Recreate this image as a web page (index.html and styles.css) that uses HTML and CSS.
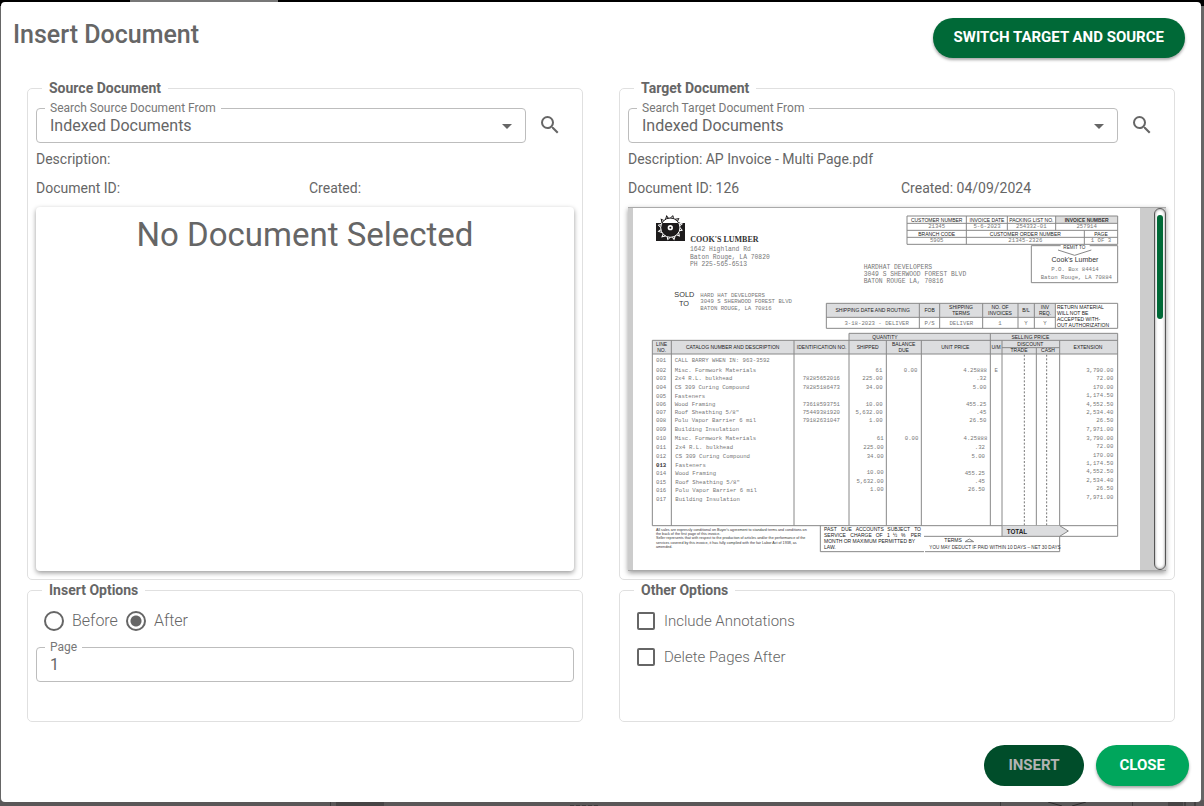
FILE: index.html
```html
<!DOCTYPE html>
<html lang="en">
<head>
<meta charset="utf-8">
<meta name="viewport" content="width=device-width, initial-scale=1">
<title>Insert Document</title>
<link rel="stylesheet" href="styles.css">
</head>
<body class="backdrop">
<div class="backdrop-tab"></div>
<svg class="backdrop-foot" width="1204" height="4" viewBox="0 0 1204 4" aria-hidden="true">
  <path d="M330.500 0V4M1000.500 0V4M1132.500 0V4" stroke="#3e3c3d"/>
  <path d="M336 0h48v4h-48zM1168 0h15v4h-15z" fill="#474445"/>
  <path d="M1048 0l14 4M1086 0l-14 4M1185 0v4M1195 0v4" stroke="#2e2c2d" fill="none"/>
  <path d="M570 3.500h28" stroke="#3e3c3d" stroke-dasharray="4 2"/>
</svg>
<main class="dialog" role="dialog" aria-labelledby="dialog-title">
  <header class="dialog-header">
    <h1 class="dialog-title" id="dialog-title">Insert Document</h1>
    <button class="btn btn-primary" type="button">SWITCH TARGET AND SOURCE</button>
  </header>

  <form class="columns">
    <fieldset class="group">
      <legend class="group-title">Source Document</legend>
      <div class="search-row">
        <div class="field">
          <label class="field-label" for="source-from">Search Source Document From</label>
          <select class="field-control" id="source-from"><option>Indexed Documents</option></select>
          <svg class="field-arrow" width="24" height="24" viewBox="0 0 24 24" aria-hidden="true"><path d="M7 10l5 5 5-5z"/></svg>
        </div>
        <button class="icon-btn" type="button" aria-label="Search source document">
          <svg width="24" height="24" viewBox="0 0 24 24" aria-hidden="true"><path d="M15.500 14h-.79l-.28-.27A6.471 6.471 0 0 0 16 9.500 6.500 6.500 0 1 0 9.500 16c1.610 0 3.090-.59 4.230-1.570l.27.28v.79l5 4.990L20.490 19l-4.990-5zm-6 0C7.010 14 5 11.990 5 9.500S7.010 5 9.500 5 14 7.010 14 9.500 11.990 14 9.500 14z"/></svg>
        </button>
      </div>
      <div class="info">
        <span class="info-wide">Description:</span>
        <span>Document ID:</span>
        <span>Created:</span>
      </div>
      <div class="preview preview-empty">No Document Selected</div>
    </fieldset>

    <fieldset class="group">
      <legend class="group-title">Target Document</legend>
      <div class="search-row">
        <div class="field">
          <label class="field-label" for="target-from">Search Target Document From</label>
          <select class="field-control" id="target-from"><option>Indexed Documents</option></select>
          <svg class="field-arrow" width="24" height="24" viewBox="0 0 24 24" aria-hidden="true"><path d="M7 10l5 5 5-5z"/></svg>
        </div>
        <button class="icon-btn" type="button" aria-label="Search target document">
          <svg width="24" height="24" viewBox="0 0 24 24" aria-hidden="true"><path d="M15.500 14h-.79l-.28-.27A6.471 6.471 0 0 0 16 9.500 6.500 6.500 0 1 0 9.500 16c1.610 0 3.090-.59 4.230-1.570l.27.28v.79l5 4.990L20.490 19l-4.990-5zm-6 0C7.010 14 5 11.990 5 9.500S7.010 5 9.500 5 14 7.010 14 9.500 11.990 14 9.500 14z"/></svg>
        </button>
      </div>
      <div class="info">
        <span class="info-wide">Description: AP Invoice - Multi Page.pdf</span>
        <span>Document ID: 126</span>
        <span>Created: 04/09/2024</span>
      </div>
      <div class="preview preview-doc">
        <svg class="page" viewBox="0 0 1521 1086" role="img" aria-label="Invoice page 1 of 3">
          <defs>
            <clipPath id="above"><path d="M60 0h110v45H60z"/></clipPath>
            <clipPath id="inside"><path d="M69 45h87v54H69z"/></clipPath>
            <g id="saw" fill="none" stroke-width="3">
              <circle r="29"/>
              <path id="tooth" d="M0-29L8-36L9-28"/>
              <use href="#tooth" transform="rotate(30)"/><use href="#tooth" transform="rotate(60)"/>
              <use href="#tooth" transform="rotate(90)"/><use href="#tooth" transform="rotate(120)"/>
              <use href="#tooth" transform="rotate(150)"/><use href="#tooth" transform="rotate(180)"/>
              <use href="#tooth" transform="rotate(210)"/><use href="#tooth" transform="rotate(240)"/>
              <use href="#tooth" transform="rotate(270)"/><use href="#tooth" transform="rotate(300)"/>
              <use href="#tooth" transform="rotate(330)"/>
            </g>
          </defs>

          <!-- Company mark -->
          <path d="M69 45h87v54H69z" fill="#1d1b1c"/>
          <g clip-path="url(#above)"><use href="#saw" x="112" y="59" stroke="#1d1b1c"/></g>
          <g clip-path="url(#inside)"><use href="#saw" x="112" y="59" stroke="#fff"/></g>
          <circle cx="112" cy="59" r="8" fill="#fff"/><circle cx="112" cy="59" r="3" fill="#1d1b1c"/>
          <text class="brand" x="172" y="102">COOK'S LUMBER</text>
          <g class="mono-l">
            <text x="171" y="129">1642 Highland Rd</text>
            <text x="171" y="152">Baton Rouge, LA 70820</text>
            <text x="171" y="174">PH 225-565-6513</text>
            <text x="692" y="182">HARDHAT DEVELOPERS</text>
            <text x="692" y="204">3049 S SHERWOOD FOREST BLVD</text>
            <text x="692" y="226">BATON ROUGE LA, 70816</text>
          </g>
          <text class="sold" x="124" y="267">SOLD</text><text class="sold" x="138" y="293">TO</text>
          <g class="mono">
            <text x="202" y="266">HARD HAT DEVELOPERS</text>
            <text x="202" y="286">3049 S SHERWOOD FOREST BLVD</text>
            <text x="202" y="307">BATON ROUGE, LA 70816</text>
          </g>

          <!-- Invoice number block -->
          <path d="M1268 24h186v21h-186z" fill="#ddd"/>
          <path class="rule" d="M822 24H1454V109H822zM822 46H1454M822 67H1454M822 88H1454M1000 24V109M1123 24V67M1268 24V67M1354 67V109"/>
          <g class="head">
            <text x="911" y="41">CUSTOMER NUMBER</text><text x="1062" y="41">INVOICE DATE</text>
            <text x="1195" y="41">PACKING LIST NO.</text><text class="strong" x="1361" y="41">INVOICE NUMBER</text>
            <text x="911" y="83">BRANCH CODE</text><text x="1177" y="83">CUSTOMER ORDER NUMBER</text><text x="1404" y="83">PAGE</text>
          </g>
          <g class="mono mid">
            <text x="911" y="61">21345</text><text x="1062" y="61">5-6-2023</text><text x="1195" y="61">254332-01</text><text x="1361" y="61">257914</text>
            <text x="911" y="103">5905</text><text x="1177" y="103">21345-2326</text><text x="1404" y="103">1 OF 3</text>
          </g>

          <!-- Remit to -->
          <path class="rule" d="M1195 113h88M1370 113h84V224H1195V113M1275 126l50 16 50-16"/>
          <text class="tiny mid" x="1324" y="122">REMIT TO</text>
          <text class="remit mid" x="1326" y="161">Cook's Lumber</text>
          <g class="mono mid"><text x="1326" y="190">P.O. Box 84414</text><text x="1330" y="214">Baton Rouge, LA 70884</text></g>

          <!-- Shipping -->
          <path d="M580 286h687v42H580z" fill="#dcdddf"/>
          <path class="rule" d="M580 286H1454V361H580zM580 328H1267M859 286V361M920 286V361M1049 286V361M1155 286V361M1204 286V361M1267 286V361"/>
          <g class="head">
            <text x="719" y="313">SHIPPING DATE AND ROUTING</text><text x="890" y="313">FOB</text>
            <text x="984" y="304">SHIPPING</text><text x="984" y="321">TERMS</text>
            <text x="1101" y="304">NO. OF</text><text x="1101" y="321">INVOICES</text>
            <text x="1179" y="313">B/L</text><text x="1236" y="304">INV</text><text x="1236" y="321">REQ.</text>
          </g>
          <g class="note"><text x="1272" y="304">RETURN MATERIAL</text><text x="1272" y="321">WILL NOT BE</text><text x="1272" y="339">ACCEPTED WITH-</text><text x="1272" y="357">OUT AUTHORIZATION</text></g>
          <g class="mono mid"><text x="731" y="351">3-18-2023 - DELIVER</text><text x="890" y="351">P/S</text><text x="985" y="351">DELIVER</text><text x="1101" y="351">1</text><text x="1179" y="351">Y</text><text x="1236" y="351">Y</text></g>

          <!-- Line item grid -->
          <path d="M648 376h806v22H648zM58 397h1396v41H58z" fill="#dcdddf"/>
          <path class="rule" d="M648 397V376H1454V953H58V397H1454M58 438H1454M115 397V953M483 397V953M648 397V953M760 397V953M865 397V953M1072 376V953M1107 397V953M1280 397V953M1107 419H1280M1210 419V953"/>
          <path class="dash" d="M1174 440V953M1241 440V953"/>
          <g class="head">
            <text x="756" y="393">QUANTITY</text><text x="1192" y="393">SELLING PRICE</text>
            <text x="86" y="413">LINE</text><text x="86" y="431">NO.</text>
            <text x="299" y="423">CATALOG NUMBER AND DESCRIPTION</text><text x="566" y="423">IDENTIFICATION NO.</text>
            <text x="704" y="423">SHIPPED</text><text x="812" y="413">BALANCE</text><text x="812" y="431">DUE</text>
            <text x="967" y="423">UNIT PRICE</text><text x="1089" y="423">U/M</text><text x="1192" y="415">DISCOUNT</text>
            <text x="1158" y="433">TRADE</text><text x="1245" y="433">CASH</text><text x="1365" y="423">EXTENSION</text>
          </g>
          <g class="mono">
            <text x="69" y="461">001</text><text x="125" y="461">CALL BARRY WHEN IN: 963-3592</text>
            <text x="69" y="492">002</text><text x="125" y="492">Misc. Formwork Materials</text>
            <text x="69" y="517">003</text><text x="125" y="517">2x4 R.L. bulkhead</text><text x="509" y="517">78285652016</text>
            <text x="69" y="543">004</text><text x="125" y="543">CS 309 Curing Compound</text><text x="509" y="543">78285186473</text>
            <text x="69" y="569">005</text><text x="125" y="569">Fasteners</text>
            <text x="69" y="594">006</text><text x="125" y="594">Wood Framing</text><text x="509" y="594">73618593751</text>
            <text x="69" y="618">007</text><text x="125" y="618">Roof Sheathing 5/8"</text><text x="509" y="618">75449381920</text>
            <text x="69" y="643">008</text><text x="125" y="643">Polu Vapor Barrier 6 mil</text><text x="509" y="643">79182631047</text>
            <text x="69" y="669">009</text><text x="125" y="669">Building Insulation</text>
            <text x="69" y="697">010</text><text x="125" y="697">Misc. Formwork Materials</text>
            <text x="69" y="723">011</text><text x="127" y="723">2x4 R.L. bulkhead</text>
            <text x="69" y="749">012</text><text x="127" y="749">CS 309 Curing Compound</text>
            <text class="strong" x="69" y="776">013</text><text x="127" y="776">Fasteners</text>
            <text x="69" y="802">014</text><text x="127" y="802">Wood Framing</text>
            <text x="69" y="828">015</text><text x="127" y="828">Roof Sheathing 5/8"</text>
            <text x="69" y="853">016</text><text x="127" y="853">Polu Vapor Barrier 6 mil</text>
            <text x="69" y="879">017</text><text x="127" y="879">Building Insulation</text>
          </g>
          <g class="mono end">
            <text x="748" y="492">61</text><text x="749" y="517">225.00</text><text x="749" y="543">34.00</text><text x="749" y="594">10.00</text><text x="749" y="618">5,632.00</text><text x="749" y="643">1.00</text>
            <text x="752" y="697">61</text><text x="752" y="723">225.00</text><text x="752" y="749">34.00</text><text x="752" y="798">10.00</text><text x="752" y="824">5,632.00</text><text x="752" y="849">1.00</text>
            <text x="853" y="492">0.00</text><text x="856" y="697">0.00</text>
            <text x="1062" y="492">4.25888</text><text x="1060" y="517">.32</text><text x="1060" y="543">5.00</text><text x="1060" y="594">455.25</text><text x="1060" y="618">.45</text><text x="1060" y="643">26.50</text>
            <text x="1063" y="697">4.25888</text><text x="1056" y="723">.32</text><text x="1056" y="749">5.00</text><text x="1056" y="801">455.25</text><text x="1056" y="825">.45</text><text x="1056" y="850">26.50</text>
            <text x="1095" y="492">E</text>
            <text x="1441" y="492">3,790.00</text><text x="1441" y="517">72.00</text><text x="1441" y="543">170.00</text><text x="1441" y="568">1,174.50</text><text x="1441" y="594">4,552.50</text><text x="1441" y="618">2,534.40</text><text x="1441" y="643">26.50</text><text x="1441" y="669">7,971.00</text>
            <text x="1441" y="696">3,790.00</text><text x="1441" y="721">72.00</text><text x="1441" y="747">170.00</text><text x="1441" y="771">1,174.50</text><text x="1441" y="796">4,552.50</text><text x="1441" y="822">2,534.40</text><text x="1441" y="847">26.50</text><text x="1441" y="872">7,971.00</text>
          </g>

          <!-- Totals and terms -->
          <path d="M1107 953h173l26 16-26 16h-173z" fill="#dcdddf"/>
          <path class="rule" d="M873 985H1454V953M1107 953V985M1280 953l26 16-26 16V1031H876M873 1031H562V953M996 1001h26l-13-8z"/>
          <text class="total" x="1121" y="978">TOTAL</text>
          <text class="note" x="934" y="1002">TERMS</text>
          <text class="tiny" x="889" y="1024">YOU MAY DEDUCT IF PAID WITHIN 10 DAYS – NET 30 DAYS</text>
          <g class="fine">
            <text x="69" y="968">All sales are expressly conditional on Buyer's agreement to standard terms and conditions on</text>
            <text x="69" y="980">the back of the first page of this invoice.</text>
            <text x="69" y="994">Seller represents that with respect to the production of articles and/or the performance of the</text>
            <text x="69" y="1007">services covered by this invoice, it has fully complied with the fair Labor Act of 1938, as</text>
            <text x="69" y="1020">amended.</text>
          </g>
          <g class="note">
            <text x="573" y="970">PAST</text><text x="625" y="970">DUE</text><text x="668" y="970">ACCOUNTS</text><text x="763" y="970">SUBJECT</text><text x="864" y="970" class="end">TO</text>
            <text x="573" y="988">SERVICE</text><text x="652" y="988">CHARGE</text><text x="728" y="988">OF</text><text x="762" y="988">1</text><text x="780" y="988">½</text><text x="804" y="988">%</text><text x="864" y="988" class="end">PER</text>
            <text x="573" y="1006">MONTH OR MAXIMUM PERMITTED BY</text>
            <text x="573" y="1024">LAW.</text>
          </g>
        </svg>
        <div class="scrollbar"><div class="scrollbar-thumb"></div></div>
      </div>
    </fieldset>

    <fieldset class="group group-options">
      <legend class="group-title">Insert Options</legend>
      <div class="radio-row">
        <label class="choice choice-radio"><input class="radio" type="radio" name="position">Before</label>
        <label class="choice choice-radio"><input class="radio" type="radio" name="position" checked>After</label>
      </div>
      <div class="field">
        <label class="field-label" for="page">Page</label>
        <input class="field-control" id="page" type="text" inputmode="numeric" value="1">
      </div>
    </fieldset>

    <fieldset class="group group-options">
      <legend class="group-title">Other Options</legend>
      <div class="check-list">
        <label class="choice"><input class="check" type="checkbox">Include Annotations</label>
        <label class="choice"><input class="check" type="checkbox">Delete Pages After</label>
      </div>
    </fieldset>
  </form>

  <footer class="dialog-footer">
    <button class="btn btn-disabled" type="button" disabled>INSERT</button>
    <button class="btn btn-close" type="button">CLOSE</button>
  </footer>
</main>
</body>
</html>
```

FILE: styles.css
```css
*, *::before, *::after { box-sizing: border-box; }

.backdrop {
  margin: 0;
  min-height: 100vh;
  padding: 2px 3px 4px 1px;
  background: linear-gradient(#000 6px, #666 6px, #666 calc(100% - 6px), #5a5758 calc(100% - 6px));
  color: #666;
  font-family: Roboto, "Liberation Sans", sans-serif;
  font-size: 14px;
  line-height: 20px;
}

.backdrop-tab {
  position: absolute;
  top: 0;
  left: 130px;
  width: 148px;
  height: 2px;
  background: #777;
}

.backdrop-foot { position: absolute; left: 0; bottom: 0; max-width: 100%; }

.dialog {
  display: flex;
  flex-direction: column;
  min-height: calc(100vh - 6px);
  border-radius: 4px;
  background: #fff;
}

.dialog-header {
  display: flex;
  justify-content: space-between;
  align-items: flex-start;
  gap: 16px;
  padding: 16px 16px 20px 12px;
}

.dialog-title { margin: 0; font-size: 25px; font-weight: 500; line-height: 34px; }

.btn {
  height: 41px;
  padding: 0 24px 2px;
  border: 0;
  border-radius: 21px;
  color: #fff;
  font: bold 15px/20px Roboto, "Liberation Sans", sans-serif;
}
.btn-primary { height: 40px; padding: 0 21px 2px; background: #006937; box-shadow: 0 2px 3px rgba(0, 0, 0, .35); }
.btn-disabled { background: #004d2a; color: #b3b3b3; }
.btn-close { background: #00a65c; box-shadow: 0 2px 3px rgba(0, 0, 0, .35); }

.columns {
  display: grid;
  grid-template-columns: repeat(2, minmax(0, 1fr));
  column-gap: 36px;
  padding: 0 26px;
}

.group {
  min-width: 0;
  margin: 0;
  padding: 10px 8px 8px;
  border: 1px solid #e0e0e0;
  border-radius: 5px;
}
.group-options { padding-bottom: 39px; }
.group-title { margin-left: 6px; padding: 0 7px; font-weight: bold; }

.search-row { display: flex; align-items: center; }

.field { position: relative; flex: 1; height: 35px; }
.field-label {
  position: absolute;
  top: -8px;
  left: 9px;
  padding: 0 5px;
  background: #fff;
  color: #777;
  font-size: 12px;
  line-height: 16px;
}
.field-control {
  display: block;
  width: 100%;
  height: 100%;
  padding: 0 13px;
  border: 1px solid #bdbdbd;
  border-radius: 4px;
  appearance: none;
  background: #fff;
  color: #666;
  font: 16px/20px Roboto, "Liberation Sans", sans-serif;
}
.field-arrow { position: absolute; top: 6px; right: 7px; fill: #666; pointer-events: none; }

.icon-btn {
  display: flex;
  justify-content: center;
  width: 48px;
  padding: 0 0 2px;
  border: 0;
  background: none;
  fill: #666;
}

.info {
  display: grid;
  grid-template-columns: repeat(2, minmax(0, 1fr));
  gap: 9px 8px;
  margin: 6px 0 9px;
}
.info-wide { grid-column: 1 / -1; }

.preview { box-shadow: 0 2px 5px rgba(0, 0, 0, .4); }
.preview-empty {
  aspect-ratio: 538 / 364;
  padding-top: 8px;
  border-radius: 4px;
  font-size: 33px;
  line-height: 40px;
  text-align: center;
}
.preview-doc {
  display: flex;
  gap: 14px;
  padding-left: 5px;
  border: solid #aaa;
  border-width: 1px 0;
  background: #ccc;
}

.scrollbar {
  width: 12px;
  padding: 6px 2px;
  border: 1px solid #555;
  border-radius: 6px;
  background: #fff;
  box-shadow: inset 0 0 3px #888;
}
.scrollbar-thumb { width: 100%; height: 30%; border-radius: 3px; background: #006937; }

/* Scanned page: sizes are in page units, three to a pixel at full width */
.page { flex: 1; min-width: 0; background: #fff; fill: #777; font-family: "Liberation Sans", sans-serif; }
.rule { fill: none; stroke: #888; stroke-width: 3; }
.dash { fill: none; stroke: #777; stroke-width: 3; stroke-dasharray: 6 5; }
.mono { font: 17px "Liberation Mono", monospace; }
.mono-l { font: 19px "Liberation Mono", monospace; }
.head { fill: #222; font-size: 15px; text-anchor: middle; }
.note { fill: #222; font-size: 15px; }
.tiny { fill: #333; font-size: 14px; }
.fine { fill: #333; font-size: 11px; }
.remit { fill: #333; font-size: 21px; }
.sold { fill: #333; font-size: 22px; }
.total { fill: #222; font-size: 19px; font-weight: bold; }
.brand { fill: #333; font: bold 24px "Liberation Serif", serif; }
.strong { fill: #333; font-weight: bold; }
.mid { text-anchor: middle; }
.end { text-anchor: end; }

.radio-row { display: flex; gap: 8px; margin: 0 0 15px 8px; }
.check-list { display: grid; gap: 14px; padding-left: 9px; }
.choice { display: flex; align-items: center; gap: 9px; height: 22px; color: #666; font-size: 15px; font-weight: 300; }
.choice-radio { gap: 8px; font-size: 16px; }

.radio, .check { margin: 0; border: 2px solid #666; appearance: none; }
.radio { width: 20px; height: 20px; border-radius: 50%; }
.radio:checked { background: radial-gradient(circle, #666 5px, #fff 6px); }
.check { width: 18px; height: 18px; border-radius: 2px; }

.dialog-footer {
  display: flex;
  justify-content: flex-end;
  gap: 12px;
  margin-top: auto;
  padding: 16px 12px;
}
```
